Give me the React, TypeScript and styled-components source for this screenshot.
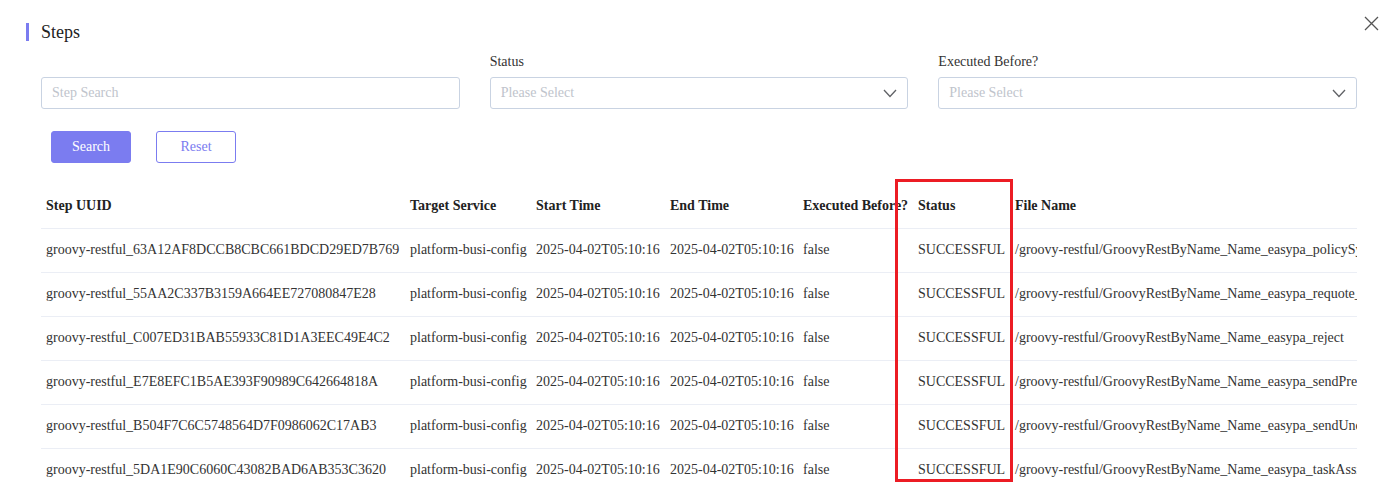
import React from "react";
import styled, { createGlobalStyle } from "styled-components";

const GlobalStyle = createGlobalStyle`
  html, body { margin: 0; padding: 0; background: #ffffff; }
  body { font-family: "Liberation Serif", "Times New Roman", serif; color: #333; }
  * { box-sizing: border-box; }
`;

const Page = styled.div`
  position: relative;
  width: 1397px;
  height: 483px;
  overflow: hidden;
  padding: 23px 40px 0 26px;
`;

const CloseButton = styled.button`
  position: absolute;
  top: 16px;
  right: 18px;
  width: 15px;
  height: 15px;
  padding: 0;
  border: none;
  background: transparent;
  display: flex;
  align-items: center;
  justify-content: center;
  cursor: pointer;
`;

const TitleRow = styled.div`
  display: flex;
  align-items: center;
  height: 18px;
  gap: 12px;
`;

const TitleBar = styled.span`
  width: 3px;
  height: 18px;
  background: #7b7cf0;
`;

const Title = styled.h2`
  margin: 0;
  font-size: 18px;
  font-weight: 400;
  line-height: 18px;
  color: #222;
`;

const Body = styled.div`
  padding-left: 15px;
`;

const FilterGrid = styled.div`
  display: grid;
  width: 1316px;
  grid-template-columns: repeat(3, 1fr);
  column-gap: 30px;
  margin-top: 11px;
  align-items: end;
`;

const Field = styled.div`
  display: flex;
  flex-direction: column;
  gap: 5px;
`;

const Label = styled.label`
  font-size: 14px;
  line-height: 20px;
  color: #333;
  min-height: 20px;
`;

const InputBox = styled.div`
  position: relative;
  height: 32px;
  border: 1px solid #c9d3e2;
  border-radius: 3px;
  display: flex;
  align-items: center;
  padding: 0 10px;
  background: #fff;
`;

const Input = styled.input`
  border: none;
  outline: none;
  flex: 1;
  padding: 0;
  font-family: "Liberation Serif", "Times New Roman", serif;
  font-size: 14px;
  color: #333;
  background: transparent;
  &::placeholder { color: #c0c4cc; }
`;

const Placeholder = styled.span`
  flex: 1;
  font-size: 14px;
  color: #c0c4cc;
`;

const Buttons = styled.div`
  display: flex;
  gap: 25px;
  margin-top: 22px;
  padding-left: 10px;
`;

const Button = styled.button<{ $primary?: boolean }>`
  width: 80px;
  height: 32px;
  border-radius: 3px;
  border: 1px solid #7b7cf0;
  background: ${(p) => (p.$primary ? "#7b7cf0" : "#ffffff")};
  color: ${(p) => (p.$primary ? "#ffffff" : "#7b7cf0")};
  font-family: "Liberation Serif", "Times New Roman", serif;
  font-size: 14px;
  cursor: pointer;
`;

const TableWrap = styled.div`
  position: relative;
  margin-top: 22px;
  width: 1316px;
`;

const Table = styled.table`
  width: 1316px;
  table-layout: fixed;
  border-collapse: collapse;
  font-size: 14px;
`;

const Th = styled.th`
  height: 43px;
  padding: 0 5px;
  text-align: left;
  font-weight: 700;
  color: #222;
  white-space: nowrap;
  border-bottom: 1px solid #ebeef5;
`;

const Td = styled.td`
  height: 44px;
  padding: 0 5px;
  color: #333;
  white-space: nowrap;
  overflow: hidden;
  border-bottom: 1px solid #ebeef5;
`;

const Highlight = styled.div`
  position: absolute;
  left: 854px;
  top: -6px;
  width: 118px;
  height: 303px;
  border: 3px solid #ec1c24;
  pointer-events: none;
`;

const Chevron = () => (
  <svg width="14" height="9" viewBox="0 0 14 9" fill="none">
    <path d="M1 1l6 6.5L13 1" stroke="#606266" strokeWidth="1.3" />
  </svg>
);

const columns = [
  { title: "Step UUID", width: 364 },
  { title: "Target Service", width: 126 },
  { title: "Start Time", width: 134 },
  { title: "End Time", width: 133 },
  { title: "Executed Before?", width: 115 },
  { title: "Status", width: 97 },
  { title: "File Name", width: 347 },
];

const rows = [
  ["groovy-restful_63A12AF8DCCB8CBC661BDCD29ED7B769", "/groovy-restful/GroovyRestByName_Name_easypa_policySync"],
  ["groovy-restful_55AA2C337B3159A664EE727080847E28", "/groovy-restful/GroovyRestByName_Name_easypa_requote_"],
  ["groovy-restful_C007ED31BAB55933C81D1A3EEC49E4C2", "/groovy-restful/GroovyRestByName_Name_easypa_reject"],
  ["groovy-restful_E7E8EFC1B5AE393F90989C642664818A", "/groovy-restful/GroovyRestByName_Name_easypa_sendPremium"],
  ["groovy-restful_B504F7C6C5748564D7F0986062C17AB3", "/groovy-restful/GroovyRestByName_Name_easypa_sendUnderwriting"],
  ["groovy-restful_5DA1E90C6060C43082BAD6AB353C3620", "/groovy-restful/GroovyRestByName_Name_easypa_taskAssign"],
];

export default function App() {
  return (
    <>
      <GlobalStyle />
      <Page>
        <CloseButton aria-label="Close">
          <svg width="15" height="15" viewBox="0 0 15 15" fill="none">
            <path d="M1 1l13 13M14 1L1 14" stroke="#555" strokeWidth="1.3" />
          </svg>
        </CloseButton>
        <TitleRow>
          <TitleBar />
          <Title>Steps</Title>
        </TitleRow>
        <Body>
          <FilterGrid>
            <Field>
              <InputBox>
                <Input placeholder="Step Search" />
              </InputBox>
            </Field>
            <Field>
              <Label>Status</Label>
              <InputBox>
                <Placeholder>Please Select</Placeholder>
                <Chevron />
              </InputBox>
            </Field>
            <Field>
              <Label>Executed Before?</Label>
              <InputBox>
                <Placeholder>Please Select</Placeholder>
                <Chevron />
              </InputBox>
            </Field>
          </FilterGrid>
          <Buttons>
            <Button $primary>Search</Button>
            <Button>Reset</Button>
          </Buttons>
          <TableWrap>
            <Table>
              <colgroup>
                {columns.map((c) => (
                  <col key={c.title} style={{ width: c.width }} />
                ))}
              </colgroup>
              <thead>
                <tr>
                  {columns.map((c) => (
                    <Th key={c.title}>{c.title}</Th>
                  ))}
                </tr>
              </thead>
              <tbody>
                {rows.map(([uuid, file]) => (
                  <tr key={uuid}>
                    <Td>{uuid}</Td>
                    <Td>platform-busi-config</Td>
                    <Td>2025-04-02T05:10:16</Td>
                    <Td>2025-04-02T05:10:16</Td>
                    <Td>false</Td>
                    <Td>SUCCESSFUL</Td>
                    <Td>{file}</Td>
                  </tr>
                ))}
              </tbody>
            </Table>
            <Highlight />
          </TableWrap>
        </Body>
      </Page>
    </>
  );
}
